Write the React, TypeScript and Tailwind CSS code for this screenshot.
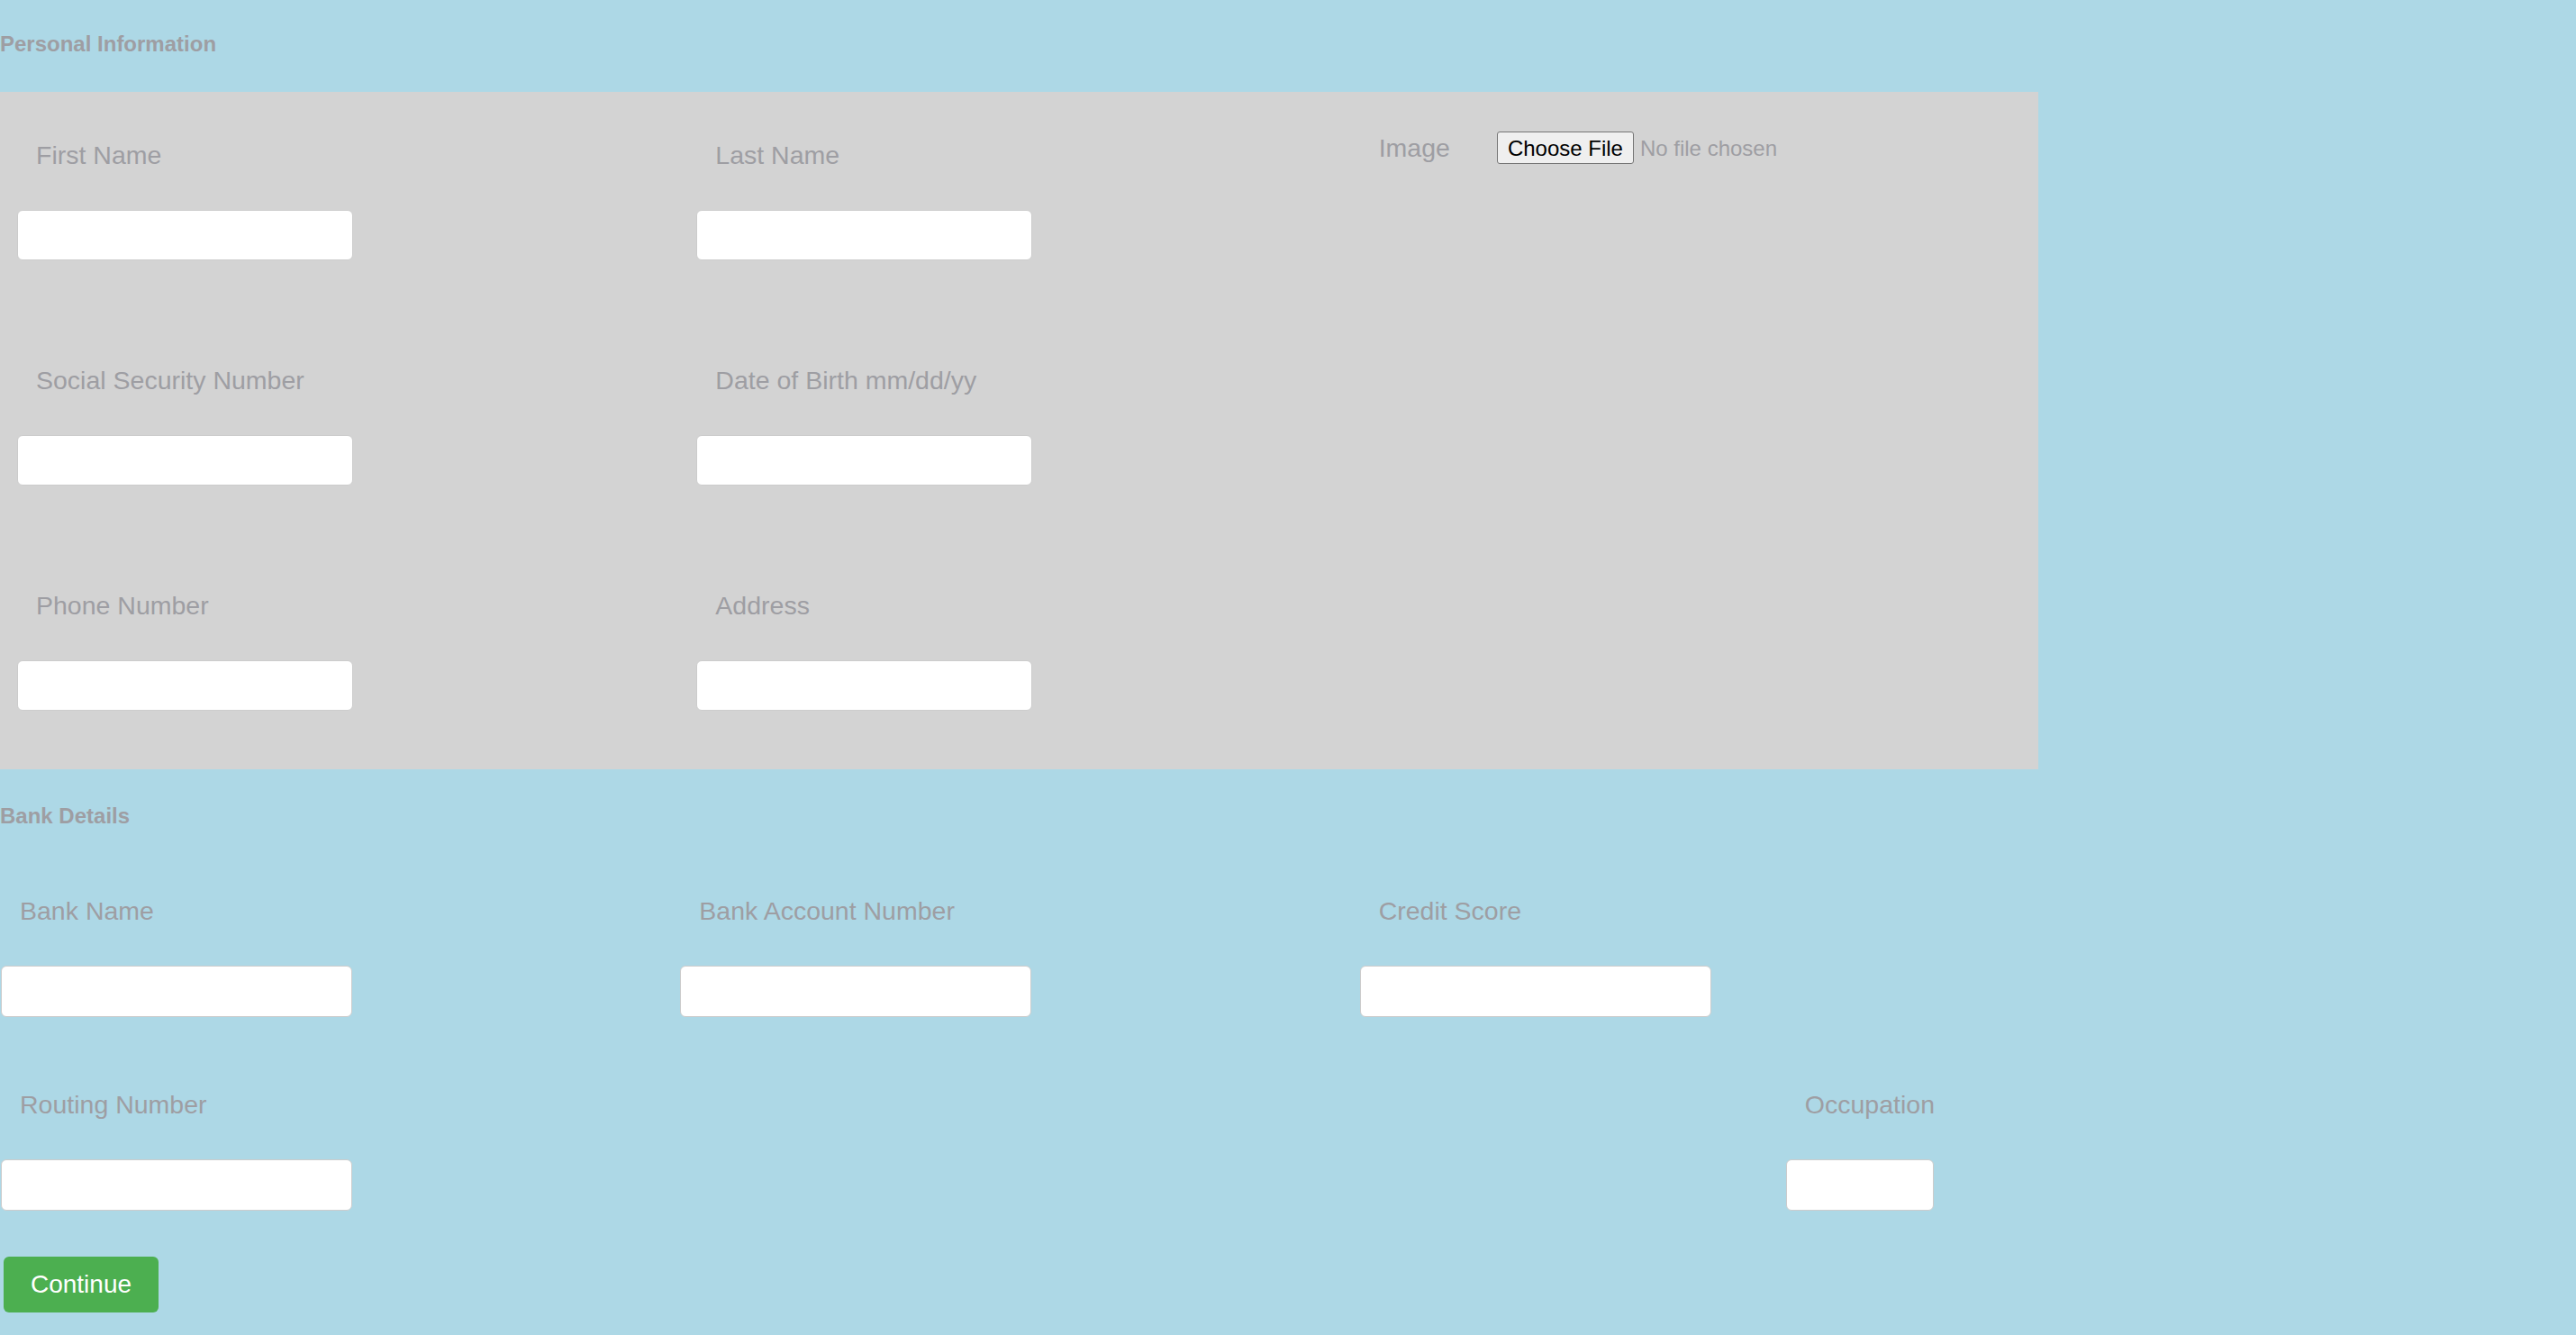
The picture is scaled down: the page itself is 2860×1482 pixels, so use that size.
import React from 'react';

const font = "font-['Liberation_Sans','Helvetica',Arial,sans-serif]";
const labelCls = `block text-[28.5px] leading-[28px] text-[#9e9ea3] ${font}`;
const inputCls = 'block bg-white border border-[#cccccc] rounded-[6px] outline-none';

// grey panel field
const PanelField = ({ label }: { label: string }) => (
  <div className="flex flex-col">
    <label className={`${labelCls} ml-[40px]`}>{label}</label>
    <input type="text" className={`${inputCls} ml-[19px] mt-[47px] w-[373px] h-[56px]`} />
  </div>
);

// bank field (sits on the blue background)
const BankField = ({ label, width = 'w-[390px]' }: { label: string; width?: string }) => (
  <div className="flex flex-col">
    <label className={`${labelCls} ml-[22px]`}>{label}</label>
    <input type="text" className={`${inputCls} ml-[1px] mt-[47px] h-[57px] ${width}`} />
  </div>
);

export default function App() {
  return (
    <div className={`min-h-screen w-full bg-[#add8e6] pt-[37px] ${font}`}>
      <h2 className="text-[24px] leading-[24px] font-bold text-[#9e9ea3]">Personal Information</h2>

      {/* Personal panel */}
      <div className="mt-[41px] w-[2263px] bg-[#d3d3d3] pt-[56px] pb-[65px] grid grid-cols-3 gap-y-[119px]">
        <PanelField label="First Name" />
        <PanelField label="Last Name" />
        <div className="flex items-center h-[36px] -mt-[12px]">
          <label className={`${labelCls} ml-[22px]`}>Image</label>
          <input
            type="file"
            className={`ml-[52px] w-[340px] text-[24px] leading-[36px] text-[#9e9ea3] ${font} file:mr-[7px] file:h-[36px] file:px-[11px] file:border file:border-solid file:border-[#767676] file:rounded-[3px] file:bg-[#efefef] file:text-black file:text-[24px] file:font-['Liberation_Sans',Arial,sans-serif]`}
          />
        </div>

        <PanelField label="Social Security Number" />
        <PanelField label="Date of Birth mm/dd/yy" />
        <div />

        <PanelField label="Phone Number" />
        <PanelField label="Address" />
        <div />
      </div>

      <h2 className="mt-[40px] text-[24px] leading-[24px] font-bold text-[#9e9ea3]">Bank Details</h2>

      <div className="mt-[79px] w-[2263px] grid grid-cols-3">
        <BankField label="Bank Name" />
        <BankField label="Bank Account Number" />
        <BankField label="Credit Score" />
      </div>

      <div className="mt-[83px] w-[2148px] flex justify-between">
        <BankField label="Routing Number" />
        <BankField label="Occupation" width="w-[164px]" />
      </div>

      <button
        type="button"
        className={`mt-[51px] ml-[4px] w-[172px] h-[62px] rounded-[6px] bg-[#4caf50] text-white text-[28px] leading-none ${font}`}
      >
        Continue
      </button>
    </div>
  );
}
